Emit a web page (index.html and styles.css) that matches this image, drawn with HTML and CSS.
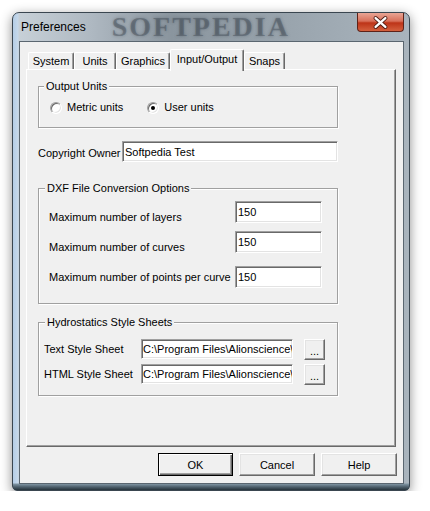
FILE: index.html
```html
<!DOCTYPE html>
<html>
<head>
<meta charset="utf-8">
<link rel="stylesheet" href="styles.css">
</head>
<body>
<div class="window">
  <div class="titlebar">
    <span class="title">Preferences</span>
    <span class="brand">SOFTPEDIA</span>
    <span class="close">
      <svg width="47" height="19" viewBox="0 0 47 19">
        <path d="M19 5 L29 14 M29 5 L19 14" stroke="#4a1a12" stroke-width="4.2" stroke-linecap="round"/>
        <path d="M19 5 L29 14 M29 5 L19 14" stroke="#ffffff" stroke-width="2.4" stroke-linecap="round"/>
      </svg>
    </span>
  </div>
  <div class="client">
    <div class="tabs">
      <div class="tab t1">System</div>
      <div class="tab t2">Units</div>
      <div class="tab t3">Graphics</div>
      <div class="tab t4 active">Input/Output</div>
      <div class="tab t5">Snaps</div>
    </div>
    <div class="panel">
      <div class="group g-output">
        <div class="legend">Output Units</div>
        <div class="radios">
          <span class="radio"><span class="circle"></span>Metric units</span>
          <span class="radio on second"><span class="circle"></span>User units</span>
        </div>
      </div>
      <div class="owner">
        <span class="owner-lbl">Copyright Owner</span>
        <input class="field owner-field" value="Softpedia Test" readonly>
      </div>
      <div class="group g-dxf">
        <div class="legend">DXF File Conversion Options</div>
        <div class="drow r1"><span class="dlbl">Maximum number of layers</span><input class="field dfield" value="150" readonly></div>
        <div class="drow r2"><span class="dlbl">Maximum number of curves</span><input class="field dfield" value="150" readonly></div>
        <div class="drow r3"><span class="dlbl">Maximum number of points per curve</span><input class="field dfield" value="150" readonly></div>
      </div>
      <div class="group g-hydro">
        <div class="legend">Hydrostatics Style Sheets</div>
        <div class="hrow h1"><span class="hlbl">Text Style Sheet</span><input class="field hfield" value="C:\Program Files\Alionscience\" readonly><span class="btn dots">...</span></div>
        <div class="hrow h2"><span class="hlbl">HTML Style Sheet</span><input class="field hfield" value="C:\Program Files\Alionscience\" readonly><span class="btn dots">...</span></div>
      </div>
    </div>
    <div class="actions">
      <span class="btn act default">OK</span>
      <span class="btn act">Cancel</span>
      <span class="btn act">Help</span>
    </div>
  </div>
</div>
</body>
</html>
```
FILE: styles.css
```css
html, body {
  margin: 0;
  padding: 0;
  background: #ffffff;
}
body {
  font-family: "Liberation Sans", Arial, sans-serif;
  font-size: 11px;
  color: #000;
}
.window {
  box-sizing: border-box;
  width: 398px;
  height: 479px;
  margin: 12px 0 0 12px;
  border: 1px solid #3a4650;
  border-radius: 7px 7px 5px 5px;
  padding: 0 5px 6px 6px;
  display: flex;
  flex-direction: column;
  box-shadow: 0 3px 12px rgba(0,0,0,0.45);
  background:
    linear-gradient(0deg, #26333b 0, #4d5f6b 3px, #7f94a2 6px, rgba(0,0,0,0) 7px),
    linear-gradient(90deg, #b4cde6 0, #c6d8ea 5px, rgba(0,0,0,0) 6px),
    linear-gradient(90deg, #c9d2d9 0%, #aeb8c1 20%, #8a959e 40%, #97a2ab 65%, #a9b4bd 100%);
}
.titlebar {
  height: 28px;
  display: flex;
  align-items: flex-start;
  flex: none;
}
.title {
  font-size: 12px;
  line-height: 14px;
  margin: 7px 0 0 2px;
  color: #000;
}
.brand {
  font-family: "Liberation Serif", serif;
  font-weight: bold;
  font-size: 28px;
  line-height: 28px;
  letter-spacing: 2px;
  margin-left: 26px;
  color: rgba(55, 65, 75, 0.4);
  text-shadow: 0 0 3px rgba(40, 50, 60, 0.35);
}
.close {
  margin-left: auto;
  width: 47px;
  height: 19px;
  box-sizing: border-box;
  border: 1px solid #5e2218;
  border-top: none;
  border-radius: 0 0 4px 4px;
  background: linear-gradient(180deg, #e9a595 0%, #d8705a 45%, #bd3418 55%, #d4603e 100%);
  display: flex;
}
.close svg {
  display: block;
  margin-left: -1px;
}
.client {
  box-sizing: border-box;
  width: 385px;
  height: 443px;
  border: 1px solid #5a6670;
  background: #f0f0f0;
  display: flex;
  flex-direction: column;
}
.tabs {
  display: flex;
  align-items: flex-end;
  height: 20px;
  margin: 7px 0 0 8px;
}
.tab {
  box-sizing: border-box;
  height: 17px;
  line-height: 16px;
  text-align: center;
  border-style: solid;
  border-width: 1px 1px 0 1px;
  border-color: #fff #696969 #fff #fff;
  box-shadow: inset -1px 0 0 #a0a0a0;
  border-radius: 2px 2px 0 0;
  background: #f0f0f0;
}
.t1 { width: 46px; }
.t2 { width: 42px; }
.t3 { width: 54px; }
.t4 { width: 74px; }
.t5 { width: 41px; }
.tab.active {
  height: 22px;
  margin-bottom: -2px;
  padding-top: 1px;
  position: relative;
  z-index: 1;
}
.panel {
  box-sizing: border-box;
  width: 370px;
  height: 378px;
  margin-left: 6px;
  border-style: solid;
  border-width: 1px;
  border-color: #fff #696969 #696969 #fff;
  box-shadow: inset -1px -1px 0 #a0a0a0;
  padding: 16px 0 0 11px;
}
.group {
  box-sizing: border-box;
  width: 300px;
  border: 1px solid #a0a0a0;
  box-shadow: inset 1px 1px 0 #fff, 1px 1px 0 #fff;
}
.legend {
  width: max-content;
  margin: -7px 0 0 5px;
  padding: 0 2px;
  line-height: 13px;
  background: #f0f0f0;
}
.g-output { height: 42px; }
.radios {
  display: flex;
  margin: 8px 0 0 11px;
  line-height: 13px;
}
.radio {
  display: flex;
  align-items: center;
  gap: 5px;
}
.radio.second { margin-left: 24px; }
.circle {
  box-sizing: border-box;
  width: 12px;
  height: 12px;
  border-radius: 50%;
  border: 1px solid;
  border-color: #a0a0a0 #ffffff #ffffff #a0a0a0;
  box-shadow: inset 1px 1px 0 #696969, inset -1px -1px 0 #e3e3e3;
  background: #fff;
  display: flex;
  align-items: center;
  justify-content: center;
}
.radio.on .circle::after {
  content: "";
  width: 4px;
  height: 4px;
  border-radius: 50%;
  background: #000;
}
.field {
  box-sizing: border-box;
  margin: 0;
  font-family: "Liberation Sans", Arial, sans-serif;
  font-size: 11px;
  color: #000;
  background: #fff;
  border: 1px solid;
  border-color: #a0a0a0 #ffffff #ffffff #a0a0a0;
  box-shadow: inset 1px 1px 0 #696969, inset -1px -1px 0 #e3e3e3;
  padding: 0 0 0 2px;
  outline: none;
}
.owner {
  display: flex;
  align-items: center;
  margin-top: 13px;
}
.owner-lbl {
  width: 84px;
  padding-top: 4px;
  line-height: 13px;
}
.owner-field {
  width: 216px;
  height: 21px;
}
.g-dxf {
  height: 116px;
  margin-top: 26px;
}
.g-dxf .legend, .g-hydro .legend { margin-left: 6px; }
.drow {
  display: flex;
  align-items: flex-start;
  padding-left: 10px;
}
.r1 { margin-top: 6px; }
.r2 { margin-top: 7px; }
.r3 { margin-top: 12px; }
.dlbl {
  width: 186px;
  line-height: 13px;
  padding-top: 10px;
}
.r3 .dlbl { padding-top: 5px; }
.dfield {
  width: 87px;
  height: 22px;
}
.g-hydro {
  height: 74px;
  margin-top: 18px;
}
.hrow {
  display: flex;
  align-items: flex-start;
  padding-left: 5px;
}
.h1 { margin-top: 10px; }
.h2 { margin-top: 4px; }
.hlbl {
  width: 97px;
  line-height: 13px;
  padding-top: 4px;
}
.hfield {
  width: 152px;
  height: 20px;
  padding-left: 1px;
}
.btn {
  box-sizing: border-box;
  display: flex;
  align-items: center;
  justify-content: center;
  background: #f0f0f0;
  border: 1px solid;
  border-color: #fff #696969 #696969 #fff;
  box-shadow: inset -1px -1px 0 #a0a0a0, inset 1px 1px 0 #e3e3e3;
}
.dots {
  width: 21px;
  height: 21px;
  margin-left: 11px;
  line-height: 12px;
  padding-top: 3px;
}
.actions {
  display: flex;
  justify-content: flex-end;
  gap: 6px;
  margin-top: 6px;
  padding-right: 6px;
}
.act {
  width: 76px;
  height: 23px;
}
.act.default {
  width: 75px;
  border: 1px solid #000;
  box-shadow: inset 1px 1px 0 #fff, inset -1px -1px 0 #696969, inset -2px -2px 0 #a0a0a0;
}
```
